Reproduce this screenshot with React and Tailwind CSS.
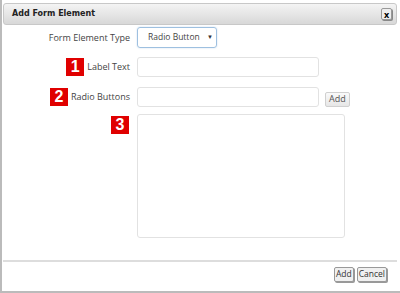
export default function App() {
  const label = "text-[9px] text-[#444] font-['Open_Sans',sans-serif] whitespace-nowrap";
  const badge =
    "w-[18px] h-[18px] bg-[#e00000] text-white text-[16px] font-bold flex items-center justify-center leading-none font-['Liberation_Sans',sans-serif]";

  return (
    <div className="w-[400px] h-[293px] bg-white border-l-2 border-b-2 border-[#bbb] pt-[3px] pr-[3px] pl-px flex flex-col font-['Open_Sans',sans-serif]">
      {/* Title bar */}
      <div className="h-[22px] shrink-0 rounded-[3px] border border-[#c8c8c8] bg-gradient-to-b from-[#f4f4f4] to-[#d8d8d8] flex items-center justify-between pl-2 pr-[4px]">
        <span className="text-[8px] font-bold text-[#222] font-['DejaVu_Sans',sans-serif]">Add Form Element</span>
        <span className="w-[11px] h-[12px] border border-[#999] bg-[#eee] rounded-[2px] flex items-center justify-center text-[9px] font-bold leading-none text-black shadow-[1px_1px_0_#888]">
          x
        </span>
      </div>

      {/* Body */}
      <div className="flex-1 flex flex-col pt-[2px]">
        <div className="flex items-center h-[21px]">
          <div className="w-[127px] flex justify-end">
            <span className={label}>Form Element Type</span>
          </div>
          <div className="ml-[7px] w-[80px] h-[21px] rounded-[3px] border border-[#9ec0e0] flex items-center pl-[10px] pr-[3px] shadow-[0_0_2px_#cde]">
            <span className="text-[8.5px] text-[#444] whitespace-nowrap">Radio Button</span>
            <span className="ml-auto text-[6px] text-[#333]">▼</span>
          </div>
        </div>

        <div className="flex items-center h-[20px] mt-[9px]">
          <div className="w-[127px] flex justify-end items-center gap-[3px]">
            <span className={badge}>1</span>
            <span className={label}>Label Text</span>
          </div>
          <div className="ml-[7px] w-[182px] h-[20px] rounded-[3px] border border-[#e2e2e2]" />
        </div>

        <div className="flex items-center h-[20px] mt-[10px]">
          <div className="w-[127px] flex justify-end items-center gap-[3px]">
            <span className={badge}>2</span>
            <span className={label}>Radio Buttons</span>
          </div>
          <div className="ml-[7px] w-[182px] h-[20px] rounded-[3px] border border-[#e2e2e2]" />
          <div className="ml-[6px] mt-[4px] h-[15px] px-[3px] rounded-[2px] border border-[#d0d0d0] bg-gradient-to-b from-[#fafafa] to-[#e6e6e6] flex items-center text-[9px] text-[#555]">
            Add
          </div>
        </div>

        <div className="flex mt-[7px]">
          <div className="w-[127px] flex justify-end pt-[2px] pr-px">
            <span className={badge}>3</span>
          </div>
          <div className="ml-[7px] w-[208px] h-[124px] rounded-[3px] border border-[#e2e2e2]" />
        </div>
      </div>

      {/* Footer */}
      <div className="border-t-2 border-[#ddd] h-[31px] shrink-0 flex items-start justify-end gap-[3px] pt-[5px] pr-[10px]">
        <span className="h-[15px] px-[1px] border border-[#999] bg-[#f0f0f0] rounded-[2px] flex items-center text-[8.5px] text-[#333] shadow-[1px_1px_0_#999]">
          Add
        </span>
        <span className="h-[15px] px-[1px] border border-[#999] bg-[#f0f0f0] rounded-[2px] flex items-center text-[8.5px] text-[#333] shadow-[1px_1px_0_#999]">
          Cancel
        </span>
      </div>
    </div>
  );
}
